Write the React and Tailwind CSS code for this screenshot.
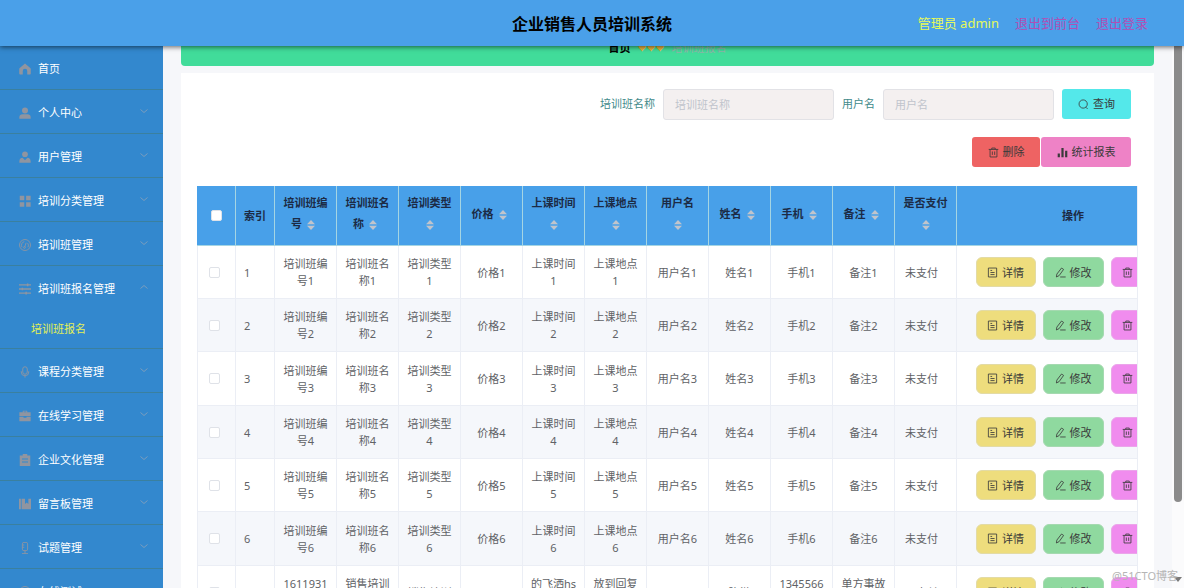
import { useState } from 'react';
import { clsx } from 'clsx';

const Icon = ({ children, className = 'w-[11px] h-[11px]', ...props }) => (
  <svg viewBox="0 0 16 16" className={clsx('shrink-0', className)} fill="none" stroke="currentColor" strokeWidth="1.2" aria-hidden="true" {...props}>
    {children}
  </svg>
);

const solid = { fill: 'currentColor', stroke: 'none' };

const icons = {
  home: <path {...solid} d="M8 .8 1 6.6c-.5.5-.7 1-.7 1.7V14c0 .8.5 1.3 1.2 1.3H5v-4.5a3 3 0 0 1 6 0v4.5h3.500c.7 0 1.200-.5 1.200-1.300V8.300c0-.7-.2-1.200-.7-1.700z" />,
  user: <g {...solid}><circle cx="8" cy="4.500" r="4" /><path d="M.5 15.500v-2.300C.5 11 2.300 9.600 4.500 9.600h7c2.200 0 4 1.400 4 3.600v2.300z" /></g>,
  userTie: <g {...solid}><circle cx="8" cy="4.300" r="3.800" /><path d="M.5 15.500v-2c0-2.400 1.700-4.300 4.200-4.500L8 12.300 11.300 9c2.500.2 4.200 2.100 4.200 4.500v2z" /></g>,
  grid: <path {...solid} d="M1 1h6v6H1zM9.500 1h6v6h-6zM1 9.500h6v6H1zM9.500 9.500h6v6h-6z" />,
  gauge: <g><circle cx="8" cy="8" r="7.300" /><path d="M4 11a5 5 0 0 1 3-7.500M12 11a5 5 0 0 0-.5-5.500M7.500 11 9.500 5" /><circle cx="7.300" cy="11.300" r="1.200" /></g>,
  operation: <g strokeWidth="1.800"><path d="M0 2.500h16M0 8h16M0 13.500h16" /><path strokeWidth="3.600" d="M10.500 2.500h2M3.500 8h2M8.500 13.500h2" /></g>,
  mic: <g><rect x="5" y="1" width="6" height="10" rx="3" /><path d="M3 7v1a5 5 0 0 0 10 0V7M8 13v2.500" /></g>,
  briefcase: <g {...solid}><path d="M5 3V1h6v2h4.500v5H.5V3zm1.200 0h3.600v-.9H6.200z" /><path d="M.5 9H6v1.200h4V9h5.500v6H.5z" /></g>,
  clipboard: <path {...solid} fillRule="evenodd" d="M5 0h6v2h4v14H1V2h4zM4 6v1.300h8V6zm0 4v1.300h8V10z" />,
  book: <path {...solid} d="M0 1h2.500v14H0zM3.500 1H8v7l2.300-2L12.500 8V1H16v14H3.500z" />,
  stand: <g><rect x="4.500" y=".5" width="7" height="11" rx="2" /><path d="M4.500 4h2.500M4.500 7h2.500M8 11.500v4M4 15.500h8" /></g>,
  search: <g><circle cx="7.500" cy="7.300" r="6" /><path d="m11.500 12 2.500 2.500" /></g>,
  trash: <path d="M1 3.500h14M5.500 3.500v-2h5v2M3 3.500v11h10v-11M6.300 6.500v5M9.700 6.500v5" />,
  chart: <path {...solid} d="M1 9.500h3.200V15H1zM6.400 1.500h3.200V15H6.400zM11.800 5.500H15V15h-3.200z" />,
  doc: <path d="M2 1.500h12v13H2zM5 5h2.500M5 8h6M5 11h6" />,
  edit: <path d="M9.500 1.500 12.500 3.500 6 12.500 2 14.500 2.700 10.300zM7.500 14.500h8" />,
};

const menu = [
  { label: '首页', icon: 'home', leaf: true },
  { label: '个人中心', icon: 'user' },
  { label: '用户管理', icon: 'userTie' },
  { label: '培训分类管理', icon: 'grid' },
  { label: '培训班管理', icon: 'gauge' },
  { label: '培训班报名管理', icon: 'operation', children: ['培训班报名'] },
  { label: '课程分类管理', icon: 'mic' },
  { label: '在线学习管理', icon: 'briefcase' },
  { label: '企业文化管理', icon: 'clipboard' },
  { label: '留言板管理', icon: 'book' },
  { label: '试题管理', icon: 'stand' },
  { label: '在线测试', icon: 'gauge' },
];

const columns = ['培训班编号', '培训班名称', '培训类型', '价格', '上课时间', '上课地点', '用户名', '姓名', '手机', '备注', '是否支付'];

const rows = [1, 2, 3, 4, 5, 6].map(n => [...columns.slice(0, 10).map(c => c + n), '未支付']);
rows.push(['1611931142', '销售培训班', '销售培训', '2000', '的飞洒hs都是', '放到回复地方', '001', '陈微', '13455664', '单方事故发生', '已支付']);

function Sidebar() {
  const [open, setOpen] = useState('培训班报名管理');

  return (
    <nav className="w-[163px] shrink-0 bg-[#3388ce] text-white">
      {menu.map(item => (
        <div key={item.label} className="border-b border-[#3a809f]">
          <button
            onClick={() => setOpen(open === item.label ? '' : item.label)}
            className="flex h-[43px] w-full items-center gap-[7px] pt-[3px] pr-[15px] pl-[19px] text-left"
          >
            <Icon className="w-3 h-3 text-[#9095a0]">{icons[item.icon]}</Icon>
            <span className="flex-1 whitespace-nowrap">{item.label}</span>
            {!item.leaf && (
              <Icon className="mb-1 w-2 h-2 text-[#7a9dbe]" strokeWidth="2">
                <path d={open === item.label ? 'M1 11l7-6 7 6' : 'M1 5l7 6 7-6'} />
              </Icon>
            )}
          </button>
          {open === item.label && item.children?.map(c => (
            <a key={c} href="#" className="flex h-[39px] items-center pt-0.5 pl-[31px] text-[#e3f056]">{c}</a>
          ))}
        </div>
      ))}
    </nav>
  );
}

function SearchField({ id, label }) {
  return (
    <div className="flex items-center gap-2">
      <label htmlFor={id} className="text-[#3f8a8a]">{label}</label>
      <input
        id={id}
        placeholder={label}
        className="h-[31px] w-[171px] rounded-[3px] border border-[#e2e2e6] bg-[#f4f0f0] px-[11px] placeholder:text-[#c0c4cc]"
      />
    </div>
  );
}

function Button({ icon, children, className }) {
  return (
    <button className={clsx('flex h-[30px] shrink-0 items-center justify-center gap-1 whitespace-nowrap text-[#3a3a3a]', className)}>
      <Icon>{icons[icon]}</Icon>
      {children}
    </button>
  );
}

function SortIcon() {
  return (
    <svg viewBox="0 0 8 12" className="mx-[5px] inline-block h-3 w-2 align-middle" fill="#c0c4cc" aria-hidden="true">
      <path d="M4 1l4 4.200H0zM4 11l4-4.200H0z" />
    </svg>
  );
}

function Checkbox({ label }) {
  return (
    <input
      type="checkbox"
      aria-label={label}
      className="block h-[11px] w-[11px] appearance-none rounded-[2px] border border-[#dfe2e8] bg-white checked:bg-[#409eff]"
    />
  );
}

function DataTable() {
  return (
    <div className="overflow-hidden border-r border-[#ebeef5]">
      <table className="w-full min-w-[992px] table-fixed border-separate border-spacing-0 text-center text-[#606266]">
        <colgroup>
          <col className="w-[39px]" />
          <col className="w-[39px]" />
          {columns.map(c => <col key={c} className="w-[62px]" />)}
          <col />
        </colgroup>
        <thead className="bg-[#48a0e9] leading-[21px] text-[#1c2b45]">
          <tr className="h-[60px]">
            <th className="border-r border-b border-[#a5d5e3] pl-3.5"><Checkbox label="全选" /></th>
            <th className="border-r border-b border-[#a5d5e3]">索引</th>
            {columns.map(c => (
              <th key={c} className="border-r border-b border-[#a5d5e3] px-[7px] pt-1.5 pb-[11px]">{c}<SortIcon /></th>
            ))}
            <th className="border-b border-[#a5d5e3]">操作</th>
          </tr>
        </thead>
        <tbody className="leading-[17px]">
          {rows.map((row, i) => (
            <tr key={i} className="h-[53px] even:bg-[#f5f7fb] nth-[3n]:h-[54px]">
              <td className="border-x border-b border-[#ebeef5] pl-[11px]"><Checkbox label={`选择第${i + 1}行`} /></td>
              <td className="border-r border-b border-[#ebeef5] pl-2 text-left">{i + 1}</td>
              {row.map((cell, j) => (
                <td key={j} className={clsx('border-r border-b border-[#ebeef5] py-2 break-all', j === 10 ? 'px-2.5 text-left' : 'px-[7px]')}>{cell}</td>
              ))}
              <td className="border-b border-[#ebeef5]">
                <div className="flex justify-center gap-[7px]">
                  <Button icon="doc" className="w-[60px] rounded-md border border-[#e3dba5] bg-[#eedd7d]">详情</Button>
                  <Button icon="edit" className="w-[61px] rounded-md border border-[#a5d9b0] bg-[#8fd99f]">修改</Button>
                  <Button icon="trash" className="w-[60px] rounded-md border border-[#eba5ea] bg-[#f08cee]">删除</Button>
                </div>
              </td>
            </tr>
          ))}
        </tbody>
      </table>
    </div>
  );
}

export default function App() {
  return (
    <div className="flex h-screen flex-col overflow-hidden bg-[#f6f7fa] font-['Noto_Sans','Noto_Sans_CJK_SC',sans-serif] text-[11px]">
      <header className="z-10 grid h-[46px] shrink-0 grid-cols-3 items-center bg-[#4aa0e9] pt-0.5 shadow-[0_1px_5px_rgba(0,0,0,0.6)]">
        <h1 className="col-start-2 text-center text-base font-bold text-black">企业销售人员培训系统</h1>
        <div className="flex justify-end gap-4 pr-9 text-[13px]">
          <span className="text-[#e6f95a]">管理员 admin</span>
          <a href="#" className="text-[#b04fb5]">退出到前台</a>
          <a href="#" className="text-[#b04fb5]">退出登录</a>
        </div>
      </header>

      <div className="flex min-h-0 flex-1">
        <Sidebar />

        <main className="-mt-[18px] min-w-0 flex-1 px-[18px]">
          <div className="mb-[7px] flex h-[38px] items-center justify-center gap-[7px] rounded bg-[#41dc9a] pt-0.5">
            <a href="#" className="font-bold text-black">首页</a>
            <span className="text-[9px] text-[#e8b23c]">♥♥♥</span>
            <span className="text-[#8fb5a8]">培训班报名</span>
          </div>

          <section className="bg-white p-4">
            <div className="mb-[17px] flex justify-end gap-2 pr-[7px]">
              <SearchField id="className" label="培训班名称" />
              <SearchField id="userName" label="用户名" />
              <Button icon="search" className="w-[69px] rounded-[3px] bg-[#54e8ea]">查询</Button>
            </div>
            <div className="mb-[19px] flex justify-end gap-px pr-[7px]">
              <Button icon="trash" className="w-[68px] rounded-[3px] bg-[#ee6363]">删除</Button>
              <Button icon="chart" className="w-[90px] rounded-[3px] bg-[#ee82c6]">统计报表</Button>
            </div>
            <DataTable />
          </section>
        </main>

        <div className="flex w-3 shrink-0 flex-col items-center justify-between bg-[#fbfbfc] pb-1.5">
          <div className="h-[85%] w-2 rounded-b-full bg-[#8b8b8b]" />
          <svg viewBox="0 0 8 5" className="h-[5px] w-2" fill="#7a7a7a" aria-hidden="true"><path d="M0 0h8L4 5z" /></svg>
        </div>
      </div>

      <div className="pointer-events-none absolute right-1.5 bottom-1 z-20 text-[#b5b5b5]">@51CTO博客</div>
    </div>
  );
}
